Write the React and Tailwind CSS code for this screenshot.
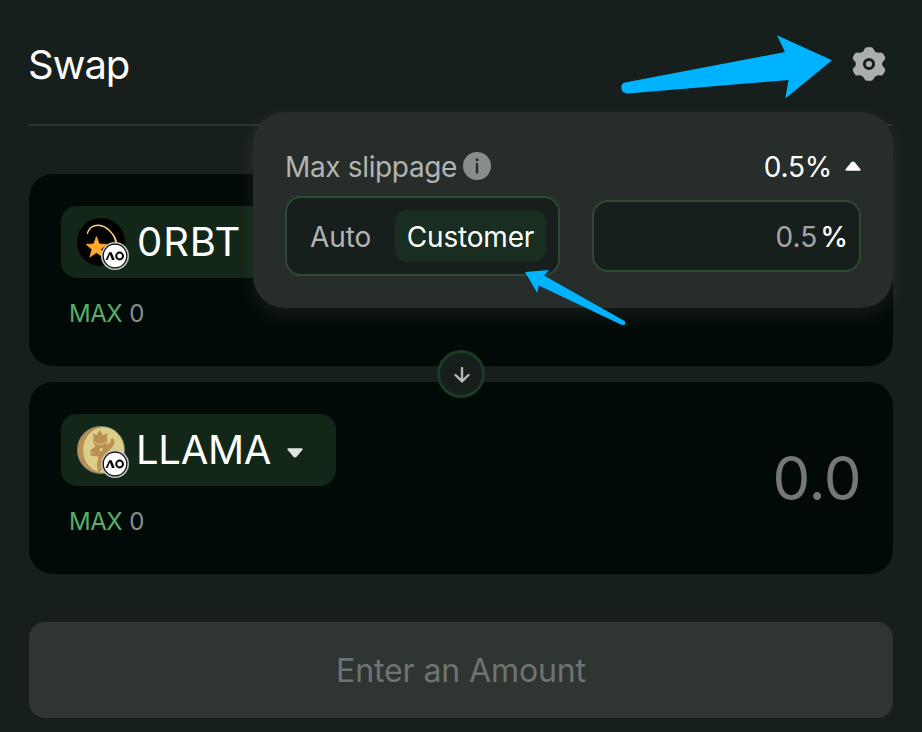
import React from "react";

function AoBadge() {
  return (
    <g>
      <circle cx="38" cy="38" r="14" fill="#c2c4c0" />
      <circle cx="38" cy="38" r="12.4" fill="#050505" />
      <circle cx="38" cy="38" r="11.2" fill="#fff" />
      <path d="M28.6 42 L32.2 34.2 H34.6 L37.8 42 H35 L32.9 36.6 L30.6 42 Z" fill="#050505" />
      <circle cx="42.6" cy="38" r="3.4" fill="none" stroke="#050505" strokeWidth="2" />
    </g>
  );
}

function OrbitIcon() {
  return (
    <svg viewBox="0 0 52 52" className="h-[52px] w-[52px] shrink-0">
      <circle cx="24" cy="24" r="24" fill="#000" />
      <path d="M9.8 15.2 C12 6.5 22 3.6 30 9.5 C36 14 40 20 40.6 26.5 L38.4 26 C37.4 19.5 34.5 14.5 29 10.8 C22 6 13 7.5 10.8 16.5 Z" fill="#ffcf78" />
      <path d="M19.4 18.6 L22.2 26 L29.6 26.4 L23.8 31.2 L26 39 L19.4 34.6 L12.8 39 L15 31.2 L9.2 26.4 L16.8 26 Z" fill="#ffa92f" stroke="#ffa92f" strokeWidth="0.8" strokeLinejoin="round" />
      <AoBadge />
    </svg>
  );
}

function LlamaIcon() {
  return (
    <svg viewBox="0 0 52 52" className="h-[52px] w-[52px] shrink-0">
      <circle cx="24" cy="24" r="24" fill="#8c8c7e" />
      <circle cx="24" cy="24" r="23" fill="#b98f52" />
      <ellipse cx="26.5" cy="24" rx="20.4" ry="22.8" fill="#dccd8a" />
      <path d="M17 12 L15.3 7.6 L19.8 9.2 L22.8 3.8 L26 9.2 L30.6 7 L29.8 12.4 L31.2 14 L28.8 19 L33.5 17 L33.6 13.4 L36 12.2 L37.5 15 L36.8 19.6 L30.5 26 L29.5 40 L21 47 L19.8 38 L21.5 30.4 L14 29.8 L13.2 24.2 L18.3 20.6 L15.8 14.6 Z" fill="#b98f52" />
      <path d="M16.8 14.6 Q19 18.8 23 18.6 Q27.5 18.6 30 14.6" fill="none" stroke="#dccd8a" strokeWidth="0.9" />
      <circle cx="24.2" cy="23.8" r="1.7" fill="#dccd8a" />
      <path d="M14.5 26 L16.6 27.4" stroke="#dccd8a" strokeWidth="1" />
      <AoBadge />
    </svg>
  );
}

function Caret({ className }) {
  return (
    <svg viewBox="0 0 16 10" className={className}>
      <path d="M1.4 0.3 H14.6 Q16 0.4 15.5 1.7 L9.6 8.8 Q8 10.2 6.4 8.8 L0.5 1.7 Q0 0.4 1.4 0.3 Z" fill="currentColor" />
    </svg>
  );
}

function Gear() {
  return (
    <svg viewBox="0 0 34 36" className="h-9 w-[34px]">
      <path
        d="M12.4 3.2 Q13 1.2 15 1.2 H19 Q21 1.2 21.6 3.2 Q22.4 6 25.2 6.6 Q27 6.8 29 6.4 Q30.6 6.4 31.4 8 L33 11 Q33.7 12.6 32.5 14 Q30 16 30 18 Q30 20 32.5 22 Q33.7 23.4 33 25 L31.4 28 Q30.6 29.6 29 29.6 Q27 29.2 25.2 29.4 Q22.4 30 21.6 32.8 Q21 34.8 19 34.8 H15 Q13 34.8 12.4 32.8 Q11.6 30 8.8 29.4 Q7 29.2 5 29.6 Q3.4 29.6 2.6 28 L1 25 Q.3 23.4 1.5 22 Q4 20 4 18 Q4 16 1.5 14 Q.3 12.6 1 11 L2.6 8 Q3.4 6.4 5 6.4 Q7 6.8 8.8 6.6 Q11.6 6 12.4 3.2 Z"
        fill="#acafad"
      />
      <circle cx="17" cy="18" r="4.6" fill="#acafad" stroke="#171f1c" strokeWidth="3" />
    </svg>
  );
}

function TokenCard({ icon, name, nameClass, amount }) {
  return (
    <section className="flex h-48 justify-between rounded-3xl bg-[#010a07] px-8">
      <div className="pt-8">
        <button className="flex h-[72px] w-[275px] items-center rounded-2xl bg-[#122718] pl-4 text-white">
          <span className="pt-1">{icon}</span>
          <span className={nameClass}>{name}</span>
          <Caret className="ml-4 mt-[5px] h-[10px] w-4 text-[#e2e5e3]" />
        </button>
        <p className="mt-[21px] pl-2 text-2xl leading-[30px] tracking-[-0.5px] text-[#5aad67]">
          MAX <span className="ml-[1px] text-[#8a8e8c]">0</span>
        </p>
      </div>
      <div className="pt-[60px] text-[60px] leading-[72px] tracking-[-0.5px] text-[#747976]">{amount}</div>
    </section>
  );
}

function SlippagePopover() {
  return (
    <div className="absolute left-[253px] top-[112px] h-[196px] w-[640px] rounded-[32px] bg-[#262d2a] px-8 pt-9 text-[28px] shadow-[0_8px_20px_rgba(255,255,255,0.08)]">
      <div className="flex h-9 items-center justify-between">
        <div className="flex items-center text-[#b1b4b2]">
          <span className="pt-[1px] tracking-[-0.35px]">Max slippage</span>
          <svg viewBox="0 0 28 28" className="ml-[6px] h-7 w-7">
            <circle cx="14" cy="14" r="14" fill="#888c8a" />
            <circle cx="14" cy="7.7" r="1.5" fill="#262d2a" />
            <path d="M14 12 V20.5" stroke="#262d2a" strokeWidth="2.4" strokeLinecap="round" />
          </svg>
        </div>
        <div className="flex items-center text-white">
          <span className="pt-[1px] tracking-[-0.2px]">0.5%</span>
          <Caret className="ml-[13px] h-[10px] w-4 rotate-180" />
        </div>
      </div>
      <div className="mt-3 flex items-center justify-between">
        <div className="flex h-20 w-[275px] items-center rounded-2xl border-2 border-[#2d4a33] bg-[#171f1c] pl-[23px]">
          <span className="w-[85px] pt-[1px] tracking-[-0.1px] text-[#b1b4b2]">Auto</span>
          <span className="flex h-[52px] w-[151px] items-center justify-center rounded-xl bg-[#192d20] pt-[1px] tracking-[-0.2px] text-white">Customer</span>
        </div>
        <div className="flex h-[72px] w-[269px] items-center justify-end gap-[3px] rounded-2xl border-2 border-[#2d4a33] bg-[#171f1c] pr-[11px] pt-[1px]">
          <span className="text-[#a3a6a4]">0.5</span>
          <span className="font-medium text-white">%</span>
        </div>
      </div>
    </div>
  );
}

export default function App() {
  return (
    <main className="relative h-[732px] w-[922px] overflow-hidden bg-[#171f1c] pl-[29px] pr-[29px] font-['Inter','Liberation_Sans',sans-serif]">
      <header className="flex h-[126px] items-center justify-between border-b-2 border-[#2c3431] pr-[7px]">
        <h1 className="-ml-[1px] pt-[5px] text-[40px] leading-[48px] tracking-[-1px] text-white">Swap</h1>
        <button className="pt-[3px]"><Gear /></button>
      </header>
      <div className="mt-12 flex flex-col gap-4">
        <TokenCard icon={<OrbitIcon />} name="0RBT" nameClass="ml-2 text-[40px] tracking-[0.9px]" amount="" />
        <TokenCard icon={<LlamaIcon />} name="LLAMA" nameClass="ml-[7px] text-[40px] tracking-[-0.3px]" amount="0.0" />
      </div>
      <div className="absolute left-[437px] top-[350px] flex h-12 w-12 items-center justify-center rounded-full border-[3px] border-[#1b3b25] bg-[#171f1c]">
        <svg viewBox="0 0 16 16" className="ml-[1px] mt-[1px] h-4 w-4">
          <path d="M8 1 V14 M1.5 8 L8 14.3 L14.5 8" fill="none" stroke="#b5b8b6" strokeWidth="2.4" strokeLinecap="round" strokeLinejoin="round" />
        </svg>
      </div>
      <button className="mt-12 h-24 w-full rounded-2xl bg-[#2f3532] pt-[1px] text-[32px] tracking-[-0.1px] text-[#6f7371]">Enter an Amount</button>
      <SlippagePopover />
      <svg viewBox="0 0 922 732" className="pointer-events-none absolute inset-0 h-full w-full">
        <path d="M625 82.5 L785 52 L777 35.3 L832 60.3 L785.3 98.5 L788.5 80 L628 93.4 Q621 93.3 621.3 87 Q621.5 83.3 625 82.5 Z" fill="#00b3ff" />
        <path d="M525 272 L549 270 L544 275.5 L624.5 321 Q626.5 323.3 624.3 325 L621.5 324.7 L538.8 285.5 L537.3 293 Z" fill="#00b3ff" />
      </svg>
    </main>
  );
}
